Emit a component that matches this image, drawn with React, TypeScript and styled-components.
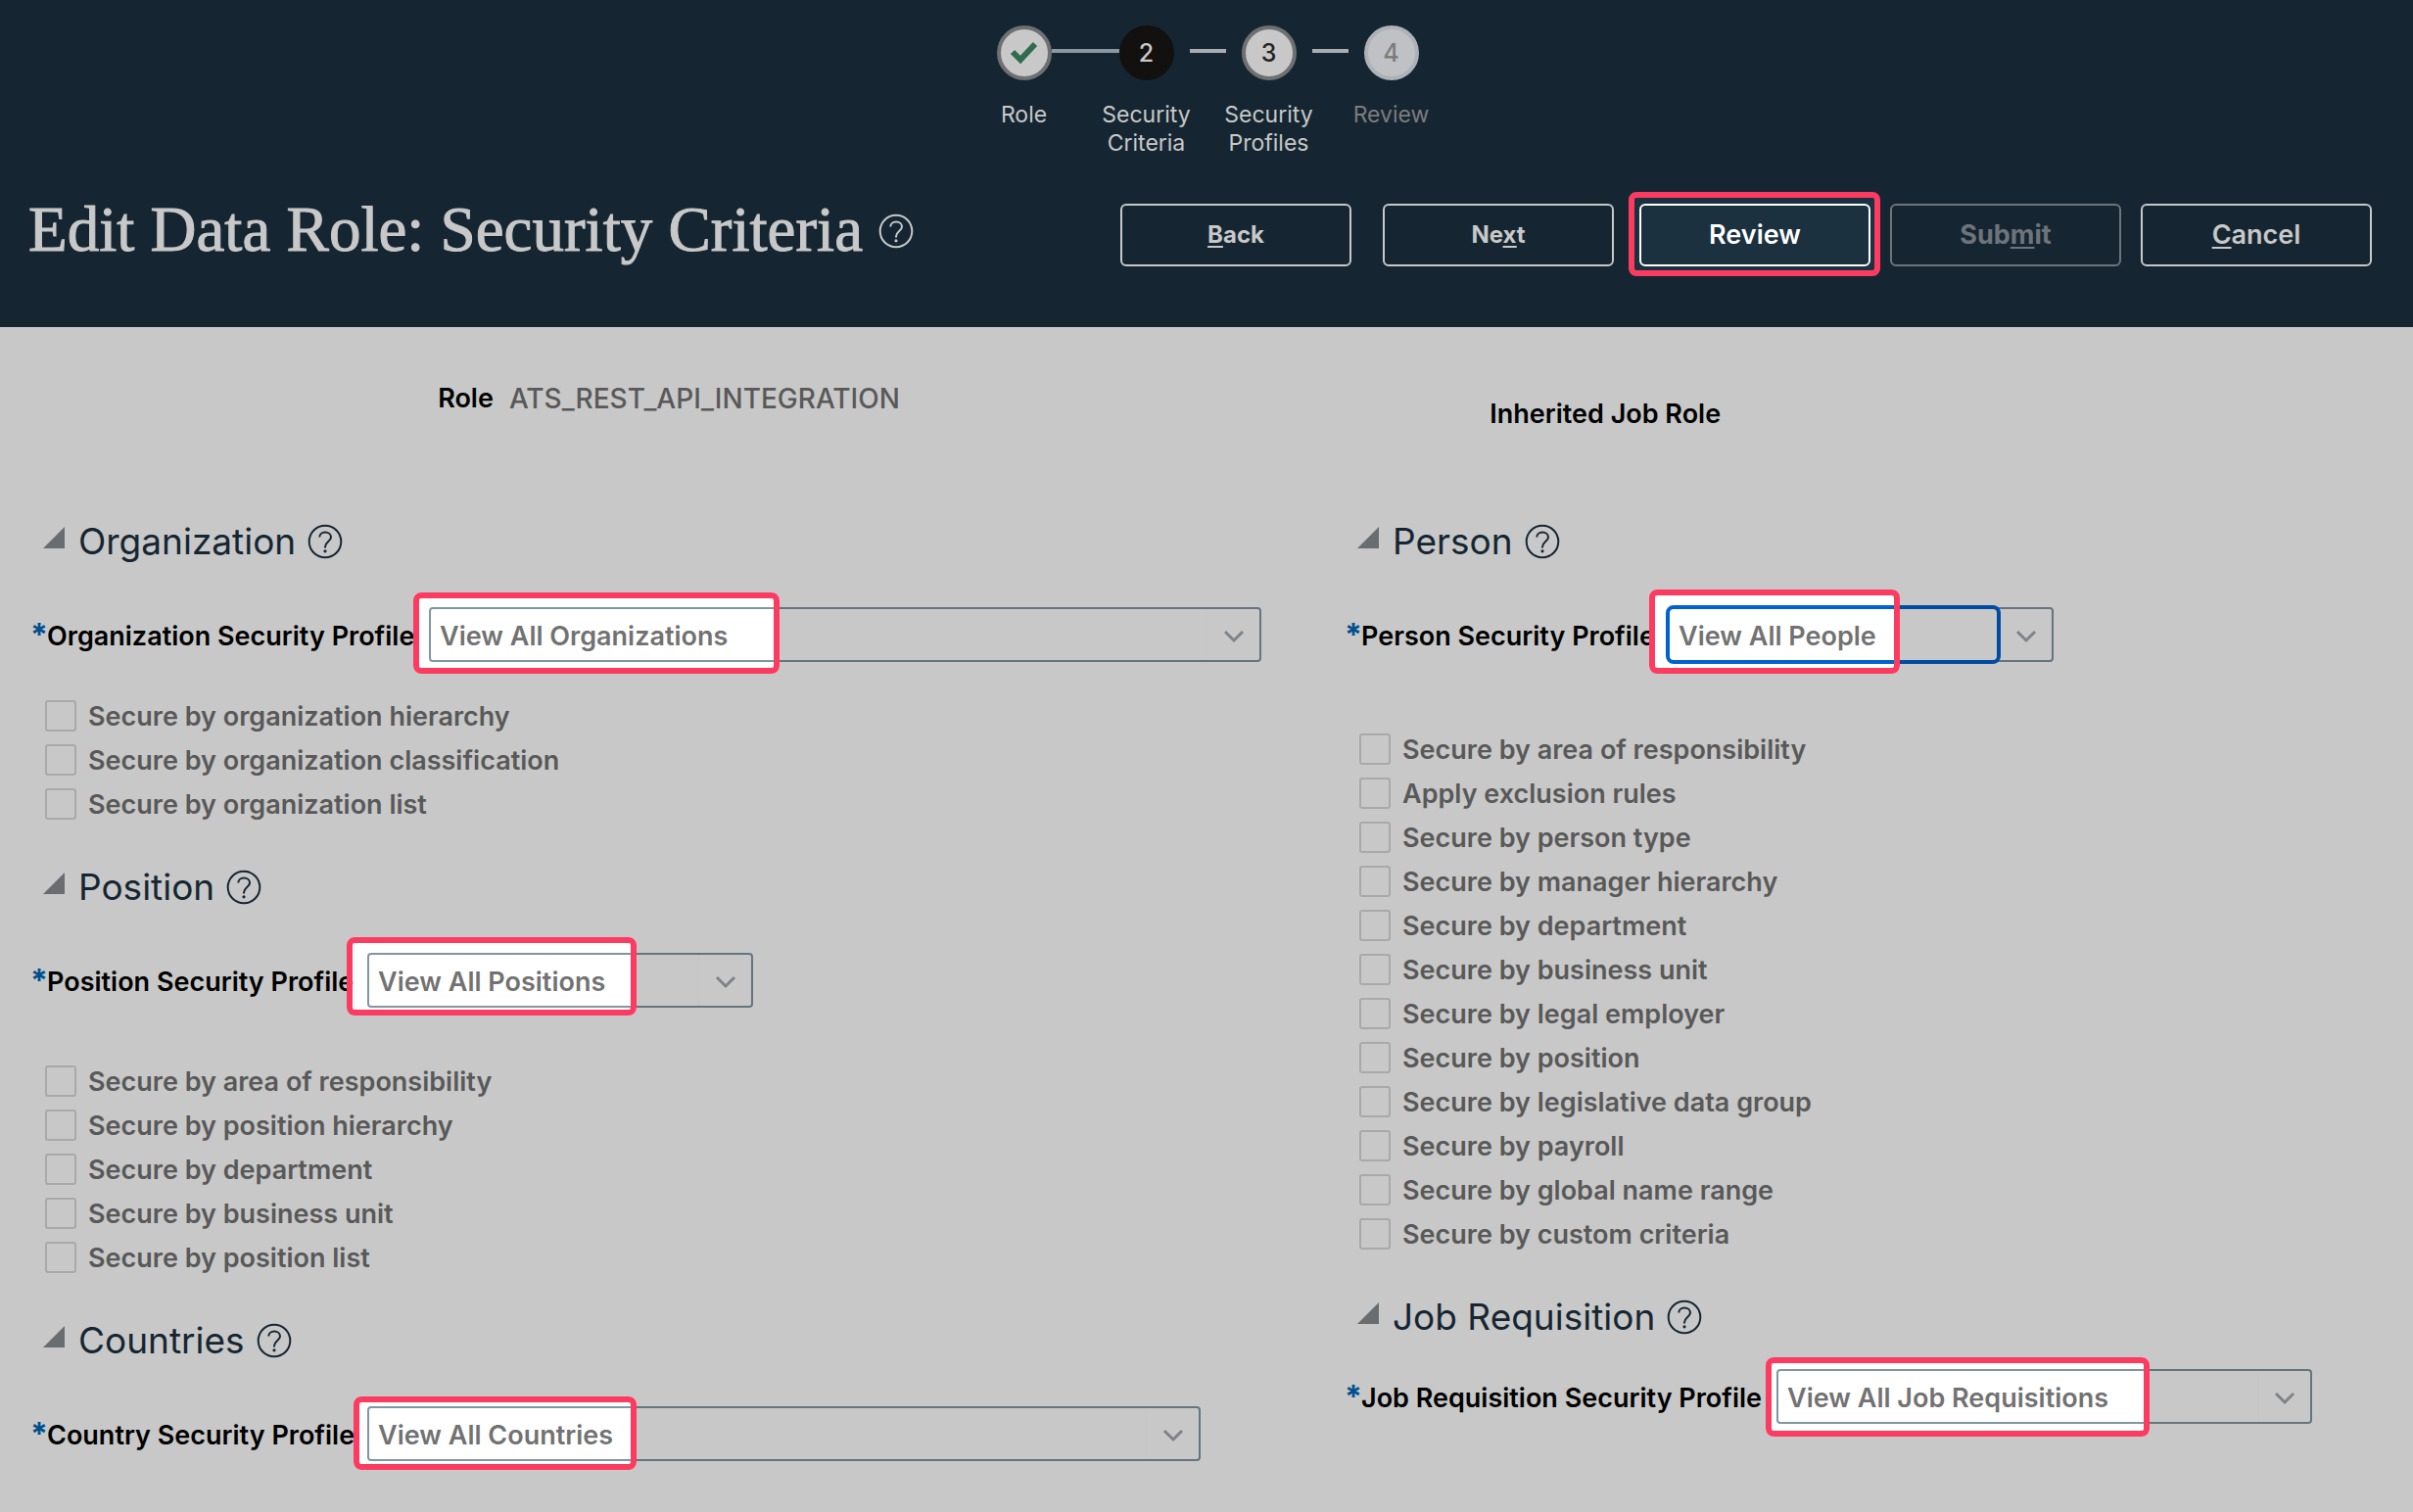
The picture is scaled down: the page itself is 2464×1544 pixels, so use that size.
import React, { useId } from "react";
import styled, { createGlobalStyle, css } from "styled-components";

const color = {
  header: "#152632",
  page: "#c8c8c8",
  light: "#c8c8c8",
  faded: "#6e747c",
  text: "#595959",
  heading: "#152632",
  fieldBorder: "#64757e",
  focus: "#004ca3",
  required: "#00508f",
  box: "#a9a9a9",
  callout: "#fc3b61",
};

const GlobalStyle = createGlobalStyle`
  *, *::before, *::after { box-sizing: border-box; }
  html { background: ${color.page}; }
  body {
    margin: 0;
    background: ${color.page};
    font-family: Inter, "Liberation Sans", sans-serif;
    font-size: 27px;
    line-height: 34px;
    font-weight: 600;
    color: ${color.text};
  }
`;

const Page = styled.div`
  min-height: 100vh;
  background: ${color.page};
  overflow: hidden;
`;

const Header = styled.header`
  background: ${color.header};
  color: ${color.light};
  padding: 26px 42px 46px 29px;
`;

/* ---- Train ---- */

type StepState = "done" | "current" | "next" | "locked";

const Train = styled.ol`
  list-style: none;
  margin: 0;
  padding: 0 0 0 15px;
  display: flex;
  justify-content: center;
`;

const Step = styled.li`
  width: 125px;
  height: 140px;
  display: flex;
  flex-direction: column;
  gap: 21px;
`;

const MarkerRow = styled.div`
  display: grid;
  grid-template-columns: 1fr 56px 1fr;
  align-items: center;
`;

const Line = styled.span<{ $tone: "none" | "done" | "todo"; $side: "left" | "right" }>`
  height: 4px;
  margin-bottom: 4px;
  background: ${(p) => ({ none: "transparent", done: "#8c97a0", todo: "#a9adb2" })[p.$tone]};
  ${(p) =>
    p.$tone === "todo" &&
    (p.$side === "left" ? css`margin-right: 16px;` : css`margin-left: 16px;`)}
`;

const markerStyles = {
  done: css`background: #c8c8c8; border-color: #6e7071; color: #2f6b4f;`,
  current: css`background: #12110f; border-color: #12110f; color: #c8c8c8;`,
  next: css`background: #c8c8c8; border-color: #6e7071; color: #242424;`,
  locked: css`background: #bfc1c4; border-color: #adb2b9; color: #7c7c7c;`,
};

const Marker = styled.span<{ $state: StepState }>`
  width: 56px;
  height: 56px;
  border: 4px solid;
  border-radius: 50%;
  display: flex;
  align-items: center;
  justify-content: center;
  font-size: 25px;
  font-weight: 500;
  ${(p) => markerStyles[p.$state]}
`;

const StepLabel = styled.span<{ $state: StepState }>`
  padding: 0 16px;
  text-align: center;
  font-size: 23px;
  line-height: 29px;
  font-weight: 400;
  color: ${(p) => (p.$state === "locked" ? "#7c7c7c" : color.light)};
`;

/* ---- Title bar ---- */

const TitleBar = styled.div`
  display: flex;
  align-items: center;
  justify-content: space-between;
  height: 96px;
  margin-top: 26px;
`;

const TitleGroup = styled.div`
  display: flex;
  align-items: center;
  gap: 16px;
  padding-bottom: 8px;
`;

const Title = styled.h1`
  margin: 0;
  padding-bottom: 4px;
  font-family: "Liberation Serif", serif;
  font-weight: 400;
  font-size: 65px;
  line-height: 76px;
  white-space: nowrap;
  -webkit-text-stroke: 1px currentColor;
`;

const Actions = styled.div`
  display: flex;
  align-items: center;
  gap: 20px;
`;

const NavActions = styled.div`
  display: flex;
  gap: 32px;
  margin-right: 6px;
`;

const ActionSlot = styled.div`
  position: relative;
  display: flex;
`;

const ActionButton = styled.button<{ $small?: boolean }>`
  width: 236px;
  height: 64px;
  padding: 0;
  border: 2px solid ${color.light};
  border-radius: 6px;
  background: transparent;
  color: ${color.light};
  font-family: inherit;
  font-size: ${(p) => (p.$small ? "24px" : "27px")};
  font-weight: ${(p) => (p.$small ? 700 : 600)};
  line-height: 34px;

  &:disabled {
    border-color: ${color.faded};
    color: ${color.faded};
    font-weight: 700;
  }
`;

const AccessKey = styled.span`
  text-decoration: underline;
  text-decoration-thickness: 2px;
  text-underline-offset: 3px;
  text-decoration-skip-ink: none;
`;

const HelpButton = styled.button`
  display: flex;
  padding: 0;
  border: 0;
  background: none;
  color: inherit;
`;

/* Lifted, outlined area that marks what the reader has to check. */
const Callout = styled.span<{ $top: number; $left: number; $width: number; $height: number }>`
  position: absolute;
  z-index: 2;
  top: ${(p) => p.$top}px;
  left: ${(p) => p.$left}px;
  width: ${(p) => p.$width}px;
  height: ${(p) => p.$height}px;
  border: 6px solid ${color.callout};
  border-radius: 8px;
  backdrop-filter: brightness(1.28);
  pointer-events: none;
`;

/* ---- Content ---- */

const Content = styled.main`
  display: grid;
  grid-template-columns: 1342fr 1122fr;
`;

const Column = styled.div`
  min-width: 0;
  padding-left: 31px;
`;

const Info = styled.dl<{ $offset: number; $columns: string }>`
  margin: 0 0 0 -31px;
  height: 197px;
  padding-top: ${(p) => p.$offset}px;
  display: grid;
  grid-template-columns: ${(p) => p.$columns};
  column-gap: 16px;
  align-items: start;

  dt {
    text-align: right;
    color: #000;
  }
  dd {
    margin: 0;
    font-size: 28px;
    font-weight: 500;
  }
`;

const Section = styled.section`
  margin-bottom: 41px;
`;

const SectionHeader = styled.div`
  display: flex;
  align-items: center;
  height: 44px;
  padding-left: 13px;
  color: ${color.heading};
`;

const Disclosure = styled.button`
  display: flex;
  padding: 0;
  border: 0;
  margin: 0 14px 8px 0;
  background: none;
`;

const SectionTitle = styled.h2`
  margin: 0 12px 0 0;
  font-size: 37px;
  line-height: 44px;
  font-weight: 400;
`;

const FieldRow = styled.div<{ $gap: number }>`
  display: flex;
  align-items: center;
  margin-top: ${(p) => p.$gap}px;
`;

const FieldLabel = styled.label<{ $width: number }>`
  display: flex;
  flex: none;
  width: ${(p) => p.$width}px;
  padding-top: 3px;
  color: #000;
  white-space: nowrap;
`;

const Required = styled.span`
  flex: none;
  width: 17px;
  color: ${color.required};
  font-size: 32px;
  line-height: 32px;
  font-weight: 700;
`;

const SelectBox = styled.div<{ $width: number }>`
  position: relative;
  width: ${(p) => p.$width}px;
`;

const Select = styled.select`
  display: block;
  width: 100%;
  height: 56px;
  padding: 3px 56px 0 9px;
  appearance: none;
  outline: none;
  border: 2px solid ${color.fieldBorder};
  border-radius: 4px;
  background: transparent;
  color: ${color.text};
  font: inherit;
`;

const Arrow = styled.span`
  position: absolute;
  top: 2px;
  right: 2px;
  bottom: 2px;
  width: 54px;
  display: flex;
  align-items: center;
  justify-content: center;
  padding-top: 4px;
  border-left: 1px solid #c5c5c5;
  pointer-events: none;
`;

const FocusRing = styled.span`
  position: absolute;
  inset: -2px 54px -2px -2px;
  border: 4px solid ${color.focus};
  border-radius: 8px;
  pointer-events: none;
`;

const CheckList = styled.ul<{ $gap: number }>`
  list-style: none;
  margin: ${(p) => p.$gap}px 0 0;
  padding: 0 0 0 15px;
`;

const CheckLabel = styled.label`
  display: flex;
  align-items: center;
  gap: 12px;
  height: 45px;
`;

const CheckText = styled.span`
  padding-top: 3px;
`;

const CheckBox = styled.input`
  appearance: none;
  flex: none;
  width: 32px;
  height: 32px;
  margin: 0;
  border: 2px solid ${color.box};
  border-radius: 3px;
`;

/* ---- Drawings ---- */

const Help = ({ label }: { label: string }) => (
  <HelpButton type="button" aria-label={label}>
    <svg width="36" height="36" viewBox="0 0 36 36" fill="none" stroke="currentColor" strokeWidth="2">
      <circle cx="18" cy="18" r="16.3" />
      <path d="M12.3 13.6c0-3 2.400-5 5.800-5s5.900 2 5.900 5c0 4.400-6 4.700-6 9.900v1" />
      <circle cx="18" cy="27.800" r="1.600" fill="currentColor" stroke="none" />
    </svg>
  </HelpButton>
);

const Tick = () => (
  <svg width="32" height="26" viewBox="0 0 32 26" fill="none" stroke="currentColor" strokeWidth="6">
    <path d="M4 12l8 8L27 4" />
  </svg>
);

const Triangle = () => (
  <svg width="22" height="22" viewBox="0 0 22 22">
    <path d="M22 0v22H0z" fill="#696d70" />
  </svg>
);

const Chevron = () => (
  <svg width="22" height="14" viewBox="0 0 22 14" fill="none" stroke="#808386" strokeWidth="3">
    <path d="M2 2l9 9 9-9" />
  </svg>
);

/* ---- Data ---- */

type Box = { top: number; left: number; width: number; height: number };

type SectionData = {
  title: string;
  label: string;
  value: string;
  labelWidth: number;
  fieldWidth: number;
  fieldGap: number;
  listGap?: number;
  focused?: boolean;
  callout: Box;
  options?: string[];
};

const leftSections: SectionData[] = [
  {
    title: "Organization",
    label: "Organization Security Profile",
    value: "View All Organizations",
    labelWidth: 407,
    fieldWidth: 850,
    fieldGap: 45,
    listGap: 32,
    callout: { top: -15, left: -16, width: 374, height: 83 },
    options: [
      "Secure by organization hierarchy",
      "Secure by organization classification",
      "Secure by organization list",
    ],
  },
  {
    title: "Position",
    label: "Position Security Profile",
    value: "View All Positions",
    labelWidth: 344,
    fieldWidth: 394,
    fieldGap: 45,
    listGap: 52,
    callout: { top: -16, left: -21, width: 296, height: 80 },
    options: [
      "Secure by area of responsibility",
      "Secure by position hierarchy",
      "Secure by department",
      "Secure by business unit",
      "Secure by position list",
    ],
  },
  {
    title: "Countries",
    label: "Country Security Profile",
    value: "View All Countries",
    labelWidth: 344,
    fieldWidth: 851,
    fieldGap: 45,
    callout: { top: -10, left: -14, width: 289, height: 75 },
  },
];

const rightSections: SectionData[] = [
  {
    title: "Person",
    label: "Person Security Profile",
    value: "View All People",
    labelWidth: 330,
    fieldWidth: 394,
    fieldGap: 45,
    listGap: 66,
    focused: true,
    callout: { top: -18, left: -19, width: 256, height: 86 },
    options: [
      "Secure by area of responsibility",
      "Apply exclusion rules",
      "Secure by person type",
      "Secure by manager hierarchy",
      "Secure by department",
      "Secure by business unit",
      "Secure by legal employer",
      "Secure by position",
      "Secure by legislative data group",
      "Secure by payroll",
      "Secure by global name range",
      "Secure by custom criteria",
    ],
  },
  {
    title: "Job Requisition",
    label: "Job Requisition Security Profile",
    value: "View All Job Requisitions",
    labelWidth: 441,
    fieldWidth: 547,
    fieldGap: 31,
    callout: { top: -12, left: -11, width: 392, height: 81 },
  },
];

const steps: { label: string; state: StepState }[] = [
  { label: "Role", state: "done" },
  { label: "Security Criteria", state: "current" },
  { label: "Security Profiles", state: "next" },
  { label: "Review", state: "locked" },
];

const CalloutBox = ({ box }: { box: Box }) => (
  <Callout $top={box.top} $left={box.left} $width={box.width} $height={box.height} />
);

const ProfileSection = ({ data }: { data: SectionData }) => {
  const id = useId();
  return (
    <Section>
      <SectionHeader>
        <Disclosure type="button" aria-expanded="true" aria-label={data.title}>
          <Triangle />
        </Disclosure>
        <SectionTitle>{data.title}</SectionTitle>
        <Help label={`${data.title} help`} />
      </SectionHeader>
      <FieldRow $gap={data.fieldGap}>
        <FieldLabel htmlFor={id} $width={data.labelWidth}>
          <Required>*</Required>
          {data.label}
        </FieldLabel>
        <SelectBox $width={data.fieldWidth}>
          <Select id={id}>
            <option>{data.value}</option>
          </Select>
          <Arrow>
            <Chevron />
          </Arrow>
          {data.focused && <FocusRing />}
          <CalloutBox box={data.callout} />
        </SelectBox>
      </FieldRow>
      {data.options && (
        <CheckList $gap={data.listGap ?? 32}>
          {data.options.map((option) => (
            <li key={option}>
              <CheckLabel>
                <CheckBox type="checkbox" />
                <CheckText>{option}</CheckText>
              </CheckLabel>
            </li>
          ))}
        </CheckList>
      )}
    </Section>
  );
};

const lineTone = (index: number) => {
  if (index < 1 || index >= steps.length) return "none";
  return index === 1 ? "done" : "todo";
};

export default function App() {
  return (
    <Page>
      <GlobalStyle />
      <Header>
        <Train>
          {steps.map((step, i) => (
            <Step key={step.label}>
              <MarkerRow>
                <Line $tone={lineTone(i)} $side="left" />
                <Marker $state={step.state}>{step.state === "done" ? <Tick /> : i + 1}</Marker>
                <Line $tone={lineTone(i + 1)} $side="right" />
              </MarkerRow>
              <StepLabel $state={step.state}>{step.label}</StepLabel>
            </Step>
          ))}
        </Train>
        <TitleBar>
          <TitleGroup>
            <Title>Edit Data Role: Security Criteria</Title>
            <Help label="Page help" />
          </TitleGroup>
          <Actions>
            <NavActions>
              <ActionButton type="button" $small>
                <AccessKey>B</AccessKey>ack
              </ActionButton>
              <ActionButton type="button" $small>
                Ne<AccessKey>x</AccessKey>t
              </ActionButton>
            </NavActions>
            <ActionSlot>
              <ActionButton type="button">Review</ActionButton>
              <CalloutBox box={{ top: -12, left: -11, width: 257, height: 86 }} />
            </ActionSlot>
            <ActionButton type="button" disabled>
              Sub<AccessKey>m</AccessKey>it
            </ActionButton>
            <ActionButton type="button">
              <AccessKey>C</AccessKey>ancel
            </ActionButton>
          </Actions>
        </TitleBar>
      </Header>
      <Content>
        <Column>
          <Info $offset={56} $columns="38fr 62fr">
            <dt>Role</dt>
            <dd>ATS_REST_API_INTEGRATION</dd>
          </Info>
          {leftSections.map((s) => (
            <ProfileSection key={s.title} data={s} />
          ))}
        </Column>
        <Column>
          <Info $offset={72} $columns="37% 1fr">
            <dt>Inherited Job Role</dt>
            <dd />
          </Info>
          {rightSections.map((s) => (
            <ProfileSection key={s.title} data={s} />
          ))}
        </Column>
      </Content>
    </Page>
  );
}
